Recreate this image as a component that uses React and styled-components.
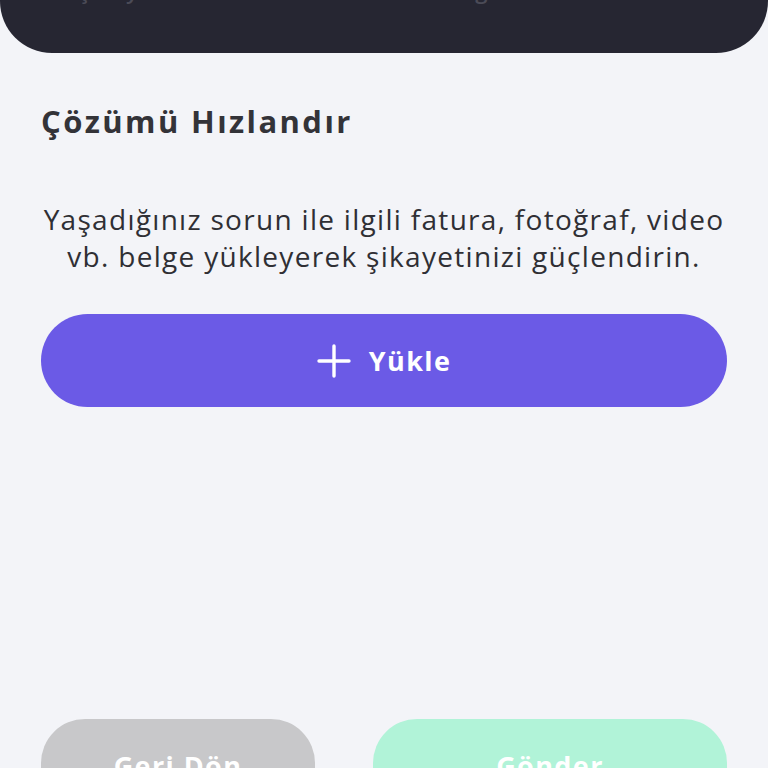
import React from 'react'
import styled, { createGlobalStyle } from 'styled-components'

const Global = createGlobalStyle`
  html, body {
    margin: 0;
    padding: 0;
    background: #f3f4f8;
    overflow: hidden;
  }
  body {
    font-family: "Open Sans", "Noto Sans", "Liberation Sans", sans-serif;
  }
`

const Page = styled.div`
  width: 768px;
  height: 768px;
  overflow: hidden;
  display: flex;
  flex-direction: column;
  > * {
    flex-shrink: 0;
  }
`

const Header = styled.header`
  margin-top: -67px;
  height: 120px;
  background: #262632;
  border-radius: 0 0 52px 52px;
  display: grid;
  grid-template-columns: repeat(4, 175px);
  padding-left: 33px;
  align-items: start;
  padding-top: 44px;
  box-sizing: border-box;
`

const Tab = styled.span`
  text-align: center;
  font-size: 22px;
  font-weight: 600;
  color: #4b4b57;
  line-height: 26px;
  letter-spacing: 1px;
`

const Content = styled.main`
  padding: 0 41px;
  display: flex;
  flex-direction: column;
`

const Title = styled.h2`
  margin: 49px 0 0;
  font-size: 31px;
  font-weight: 700;
  color: #333338;
  line-height: 38px;
  letter-spacing: 2.4px;
`

const Text = styled.p`
  margin: 61px 0 0;
  text-align: center;
  font-size: 28px;
  line-height: 37px;
  color: #2f2f34;
  letter-spacing: 1.3px;
`

const UploadButton = styled.button`
  margin-top: 39px;
  height: 93px;
  width: 100%;
  border: none;
  border-radius: 47px;
  background: #6b5ae6;
  color: #fff;
  display: flex;
  align-items: center;
  justify-content: center;
  gap: 18px;
  font-family: inherit;
  font-size: 27px;
  font-weight: 700;
  letter-spacing: 1.4px;
  padding: 0;
  svg {
    display: block;
  }
`

const Footer = styled.div`
  margin-top: 312px;
  display: flex;
  justify-content: space-between;
`

const ActionButton = styled.button`
  width: ${p => p.$w}px;
  height: 93px;
  border: none;
  border-radius: 44px;
  background: ${p => p.$bg};
  color: #fff;
  font-family: inherit;
  font-size: 27px;
  font-weight: 700;
  letter-spacing: 1.4px;
  padding: 0;
`

function Plus() {
  return (
    <svg width="34" height="34" viewBox="0 0 34 34">
      <path d="M17 2v30M2 17h30" stroke="#fff" strokeWidth="3.4" strokeLinecap="round" />
    </svg>
  )
}

export default function App() {
  return (
    <>
      <Global />
      <Page>
        <Header>
          <Tab>Şikayet</Tab>
          <Tab>Marka</Tab>
          <Tab>Belge</Tab>
        </Header>
        <Content>
          <Title>Çözümü Hızlandır</Title>
          <Text>
            Yaşadığınız sorun ile ilgili fatura, fotoğraf, video vb. belge yükleyerek şikayetinizi güçlendirin.
          </Text>
          <UploadButton>
            <Plus />
            Yükle
          </UploadButton>
          <Footer>
            <ActionButton $w={274} $bg="#c8c8ca">Geri Dön</ActionButton>
            <ActionButton $w={354} $bg="#b1f3d8">Gönder</ActionButton>
          </Footer>
        </Content>
      </Page>
    </>
  )
}
